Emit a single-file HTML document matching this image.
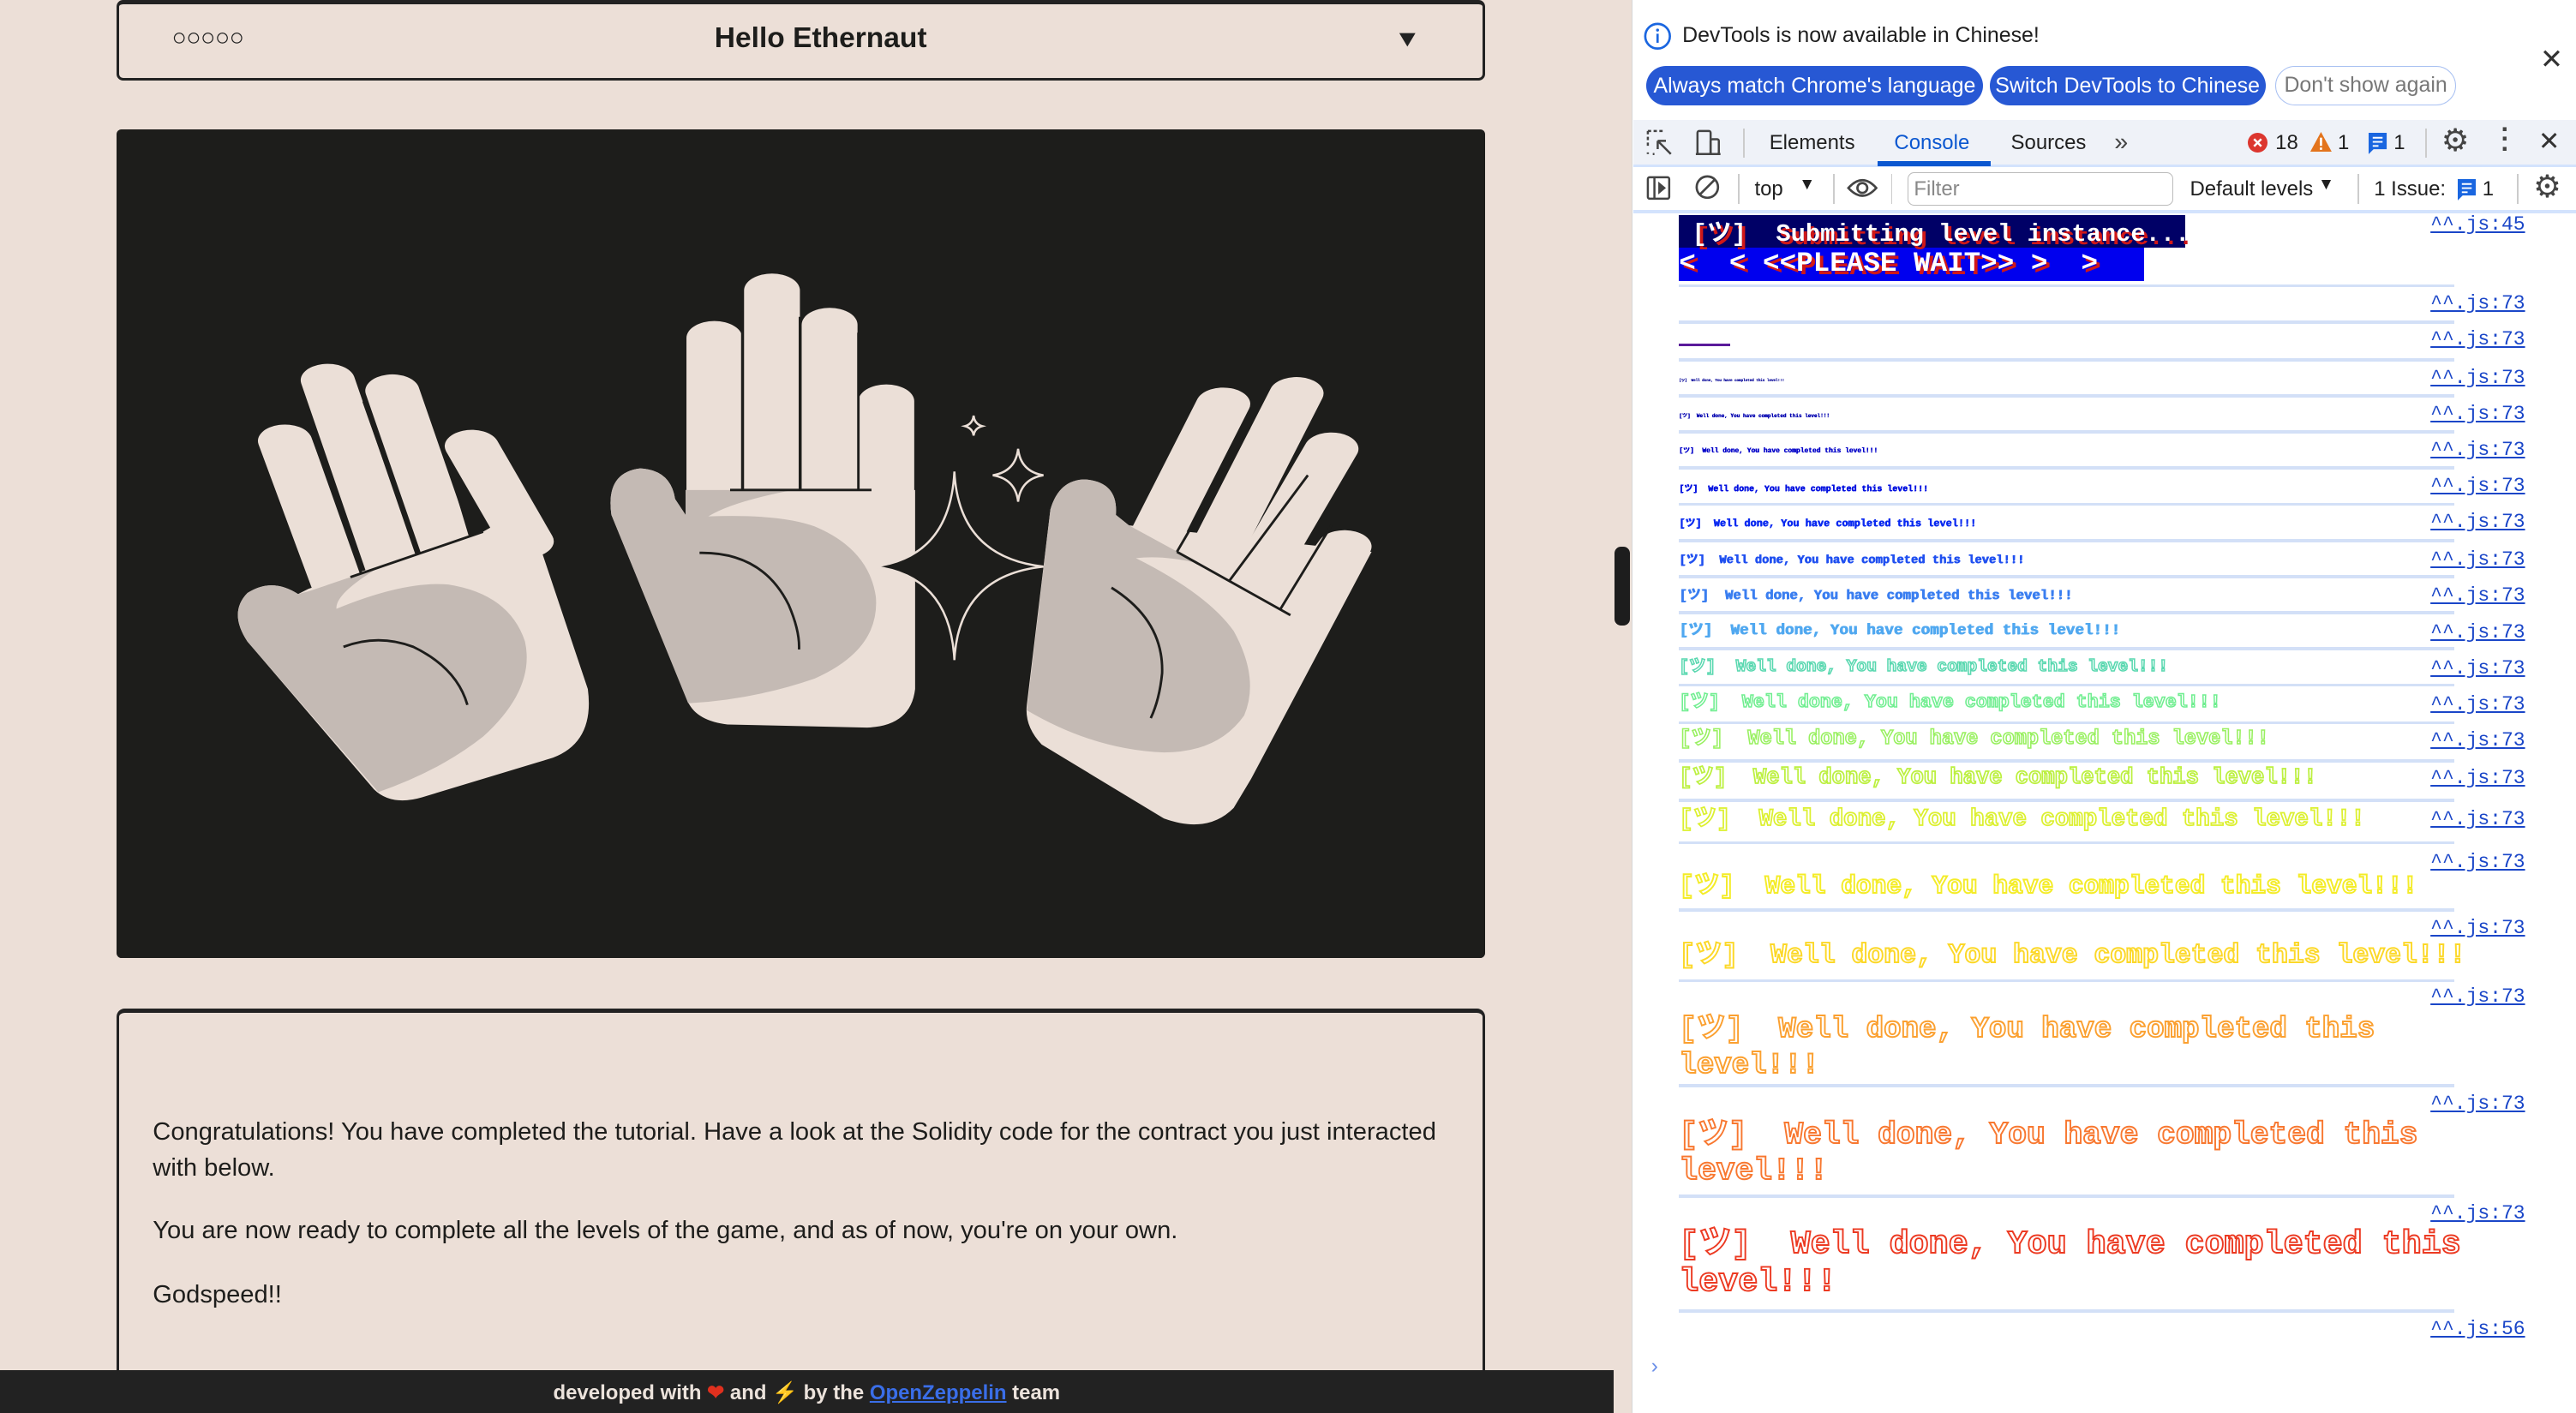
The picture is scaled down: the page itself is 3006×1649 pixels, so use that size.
<!DOCTYPE html>
<html><head><meta charset="utf-8">
<style>
html,body{margin:0;padding:0;width:3006px;height:1648px;overflow:hidden;background:#fff;}
.root{position:absolute;left:0;top:0;width:1568px;height:860px;zoom:1.91709;overflow:hidden;font-family:"Liberation Sans","Noto Sans CJK JP",sans-serif;}
.abs{position:absolute;}
.page{position:absolute;left:0;top:0;width:993px;height:860px;background:#ecdfd7;}
.hdr{position:absolute;left:71px;top:0px;width:830px;height:45px;border:2px solid #222;border-top-width:3px;border-radius:4px;box-sizing:content-box;}
.txtbox{position:absolute;left:71px;top:614px;width:830px;height:260px;border:2px solid #222;border-top-width:3px;border-radius:5px;}
.ptext{position:absolute;left:93px;font-size:15.2px;color:#1d1d1b;line-height:22px;}
.footer{position:absolute;left:0;top:834px;width:982px;height:26px;background:#222;color:#ece3dc;font-weight:bold;font-size:12.5px;text-align:center;line-height:28px;}
.dt{position:absolute;left:993px;top:0;width:575px;height:860px;background:#fff;border-left:1px solid #d6d6d6;}
.btn{position:absolute;top:40px;height:24px;border-radius:12px;background:#2758d4;color:#fff;font-size:13px;line-height:24px;text-align:center;}
.mono{font-family:"Liberation Mono","Noto Sans CJK JP",monospace;}
.lnk{position:absolute;right:31px;font-size:12px;color:#1a46c8;text-decoration:underline;line-height:14px;font-family:"Liberation Mono",monospace;}
.sep{position:absolute;left:1022px;width:472px;height:2px;background:#d3e0f7;}
.row{position:absolute;left:1022px;white-space:pre;line-height:1;font-weight:bold;font-family:"Liberation Mono","Noto Sans CJK JP",monospace;}
.f{text-shadow:0.05em 0 0 currentColor,0 0.03em 0 currentColor;}
.tb{font-size:12.5px;color:#1f1f1f;position:absolute;}
</style></head><body><div class="root">

<div class="page">
  <div class="hdr">
    <div class="abs" style="left:32px;top:12px;font-size:15px;color:#222;letter-spacing:-0.3px;">○○○○○</div>
    <div class="abs" style="left:12px;width:830px;top:11px;text-align:center;font-weight:bold;font-size:17.5px;color:#1d1d1b;">Hello Ethernaut</div>
    <div class="abs" style="left:777px;top:13px;font-size:14px;color:#222;transform:scaleX(1.2);">▼</div>
  </div>
  <div class="abs" style="left:71px;top:79px;width:833px;height:504px;background:#1d1d1b;border-radius:3px;overflow:hidden;">
    <svg width="833" height="504" viewBox="0 0 1568 1568" preserveAspectRatio="none">
      <g fill="#ebdfd7" stroke="none">
        <g stroke="#ebdfd7" stroke-width="62" stroke-linecap="round">
          <line x1="193" y1="590" x2="258" y2="880"/>
          <line x1="242" y1="475" x2="318" y2="840"/>
          <line x1="316" y1="495" x2="382" y2="810"/>
          <line x1="407" y1="600" x2="470" y2="780"/>
        </g>
        <path d="M220,870 L420,762 L470,715 L540,1060 Q548,1160 500,1190 L350,1265 Q315,1282 295,1250 L150,970 Q128,915 150,878 Q178,848 208,880 Z"/>
        <g stroke="#ebdfd7" stroke-width="64" stroke-linecap="round">
          <line x1="685" y1="395" x2="685" y2="700"/>
          <line x1="751" y1="305" x2="751" y2="700"/>
          <line x1="817" y1="370" x2="817" y2="700"/>
          <line x1="882" y1="515" x2="882" y2="700"/>
        </g>
        <path d="M652,683 L915,683 L915,1060 Q910,1130 860,1133 L700,1127 Q665,1120 655,1085 L567,730 Q560,650 600,642 Q635,645 640,700 L652,730 Z"/>
        <g stroke="#ebdfd7" stroke-width="62" stroke-linecap="round">
          <line x1="1268" y1="520" x2="1185" y2="790"/>
          <line x1="1352" y1="500" x2="1250" y2="830"/>
          <line x1="1392" y1="605" x2="1300" y2="865"/>
          <line x1="1407" y1="790" x2="1345" y2="930"/>
        </g>
        <path d="M1160,750 L1438,800 L1300,1230 L1280,1285 Q1250,1335 1200,1305 L1060,1165 Q1040,1130 1043,1090 L1070,720 Q1080,663 1110,663 Q1148,668 1145,730 Z"/>
      </g>
      <g fill="#c4bab4">
        <path d="M220,875 L300,830 Q250,880 252,908 Q330,855 380,862 Q450,880 468,970 Q480,1060 420,1150 Q370,1215 300,1255 L150,970 Q128,915 150,878 Q178,848 208,880 Z"/>
        <path d="M652,683 L775,683 Q705,705 678,733 Q760,728 800,752 Q862,795 870,885 Q875,985 800,1040 Q730,1080 655,1087 L567,730 Q560,650 600,642 Q635,645 640,700 L652,730 Z"/>
        <path d="M1160,750 L1240,822 Q1200,806 1168,812 Q1250,880 1280,950 Q1310,1040 1292,1110 Q1262,1180 1200,1180 Q1120,1175 1043,1100 L1070,720 Q1080,663 1110,663 Q1148,668 1145,730 Z"/>
      </g>
      <g fill="none" stroke="#1d1d1b" stroke-width="1.5">
        <path vector-effect="non-scaling-stroke" d="M268,848 L420,762 M220,560 L280,840 M283,515 L345,805 M375,605 L405,770 M260,980 Q300,955 340,980 Q390,1020 402,1090"/>
        <path vector-effect="non-scaling-stroke" d="M717,345 L717,683 M783,355 L783,683 M850,385 L850,683 M703,683 L865,683 M668,802 Q740,800 770,900 Q783,950 782,985"/>
        <path vector-effect="non-scaling-stroke" d="M1215,800 L1345,920 M1298,565 L1215,800 M1365,655 L1275,855 M1392,750 L1333,910 M1140,868 Q1200,930 1198,1030 Q1195,1080 1185,1115"/>
      </g>
      <g fill="#1d1d1b" stroke="#ebdfd7" stroke-width="1.3">
        <path vector-effect="non-scaling-stroke" d="M960,648 Q965,810 1062,828 Q965,845 960,1005 Q955,845 868,828 Q955,810 960,648 Z"/>
        <path vector-effect="non-scaling-stroke" d="M1033,605 Q1036,648 1062,655 Q1036,662 1033,705 Q1030,662 1004,655 Q1030,648 1033,605 Z"/>
        <path vector-effect="non-scaling-stroke" d="M982,542 Q983,558 992,562 Q983,566 982,580 Q981,566 972,562 Q981,558 982,542 Z"/>
      </g>
    </svg>
  </div>
  <div class="txtbox"></div>
  <div class="ptext" style="top:678px;width:792px;">Congratulations! You have completed the tutorial. Have a look at the Solidity code for the contract you just interacted with below.</div>
  <div class="ptext" style="top:738px;">You are now ready to complete all the levels of the game, and as of now, you're on your own.</div>
  <div class="ptext" style="top:777px;">Godspeed!!</div>
  <div class="footer">developed with <span style="color:#e0301e">❤</span> and <span style="color:#f5e13a">⚡</span> by the <span style="color:#3a6ee8;text-decoration:underline">OpenZeppelin</span> team</div>
  <div class="abs" style="left:983px;top:333px;width:9px;height:48px;background:#1d1d1d;border-radius:4px;"></div>
</div>

<div class="dt"></div>
<svg class="abs" style="left:1000px;top:13px" width="18" height="18" viewBox="0 0 18 18"><circle cx="9" cy="9" r="7.5" fill="none" stroke="#1a66e0" stroke-width="1.4"/><rect x="8.3" y="7.5" width="1.4" height="5.5" fill="#1a66e0"/><circle cx="9" cy="5.3" r="0.9" fill="#1a66e0"/></svg>
<div class="abs" style="left:1024px;top:14px;font-size:13px;color:#1f1f1f;">DevTools is now available in Chinese!</div>
<div class="btn" style="left:1002px;width:205px;">Always match Chrome's language</div>
<div class="btn" style="left:1211px;width:168px;">Switch DevTools to Chinese</div>
<div class="btn" style="left:1385px;width:110px;background:#fff;color:#777;border:1px solid #a9c1f2;box-sizing:border-box;line-height:22px;">Don't show again</div>
<div class="abs" style="left:1546px;top:26px;font-size:17px;color:#333;">✕</div>

<div class="abs" style="left:994px;top:73px;width:574px;height:27px;background:#eff2f8;border-bottom:2px solid #d3e3fd;"></div>
<svg class="abs" style="left:1002px;top:79px" width="16" height="16" viewBox="0 0 16 16" fill="none" stroke="#444" stroke-width="1.3"><path d="M1,1 h10 M1,1 v10 M1,14 v1 M4,15 h1" stroke-dasharray="2 1.5"/><path d="M7,7 L15,15 M7,7 v5 M7,7 h5"/></svg>
<svg class="abs" style="left:1031px;top:79px" width="17" height="16" viewBox="0 0 17 16" fill="none" stroke="#444" stroke-width="1.3"><rect x="2" y="1" width="8" height="14" rx="1"/><rect x="10" y="6" width="5" height="9" rx="1"/><path d="M1,15 h15"/></svg>
<div class="abs" style="left:1061px;top:78px;width:1px;height:18px;background:#ccc;"></div>
<div class="tb" style="left:1077px;top:80px;">Elements</div>
<div class="tb" style="left:1153px;top:80px;color:#0b57d0;">Console</div>
<div class="abs" style="left:1143px;top:98px;width:69px;height:3px;background:#0b57d0;"></div>
<div class="tb" style="left:1224px;top:80px;">Sources</div>
<div class="tb" style="left:1287px;top:78px;font-size:15px;color:#444;">»</div>
<svg class="abs" style="left:1368px;top:81px" width="12" height="12"><circle cx="6" cy="6" r="6" fill="#dc362e"/><path d="M3.8,3.8 L8.2,8.2 M8.2,3.8 L3.8,8.2" stroke="#fff" stroke-width="1.3"/></svg>
<div class="tb" style="left:1385px;top:80px;">18</div>
<svg class="abs" style="left:1406px;top:80px" width="14" height="13"><path d="M7,0.5 L13.5,12.5 H0.5 Z" fill="#e3741d"/><rect x="6.3" y="4" width="1.4" height="5" fill="#fff"/><rect x="6.3" y="10" width="1.4" height="1.4" fill="#fff"/></svg>
<div class="tb" style="left:1423px;top:80px;">1</div>
<svg class="abs" style="left:1442px;top:81px" width="11" height="13"><path d="M0,0 H11 V10 H3 L0,13 Z" fill="#1a66e0"/><path d="M2.5,3 H8.5 M2.5,5.5 H8.5 M2.5,8 H6" stroke="#fff" stroke-width="1"/></svg>
<div class="tb" style="left:1457px;top:80px;">1</div>
<div class="abs" style="left:1476px;top:78px;width:1px;height:18px;background:#ccc;"></div>
<div class="abs" style="left:1486px;top:74px;font-size:19px;color:#444;">⚙</div>
<div class="abs" style="left:1522px;top:76px;font-size:16px;color:#444;font-weight:bold;line-height:6px;width:6px;text-align:center;">·<br>·<br>·</div>
<div class="abs" style="left:1545px;top:77px;font-size:16px;color:#333;">✕</div>

<div class="abs" style="left:994px;top:128px;width:574px;height:2px;background:#d3e3fd;"></div>
<svg class="abs" style="left:1002px;top:107px" width="15" height="15" fill="none" stroke="#444" stroke-width="1.3"><rect x="1" y="1" width="13" height="13" rx="1"/><path d="M5,1 V14"/><path d="M8,5 L11,7.5 L8,10 Z" fill="#444"/></svg>
<svg class="abs" style="left:1031px;top:106px" width="16" height="16" fill="none" stroke="#444" stroke-width="1.4"><circle cx="8" cy="8" r="6.5"/><path d="M3.5,12.5 L12.5,3.5"/></svg>
<div class="abs" style="left:1058px;top:106px;width:1px;height:18px;background:#ccc;"></div>
<div class="tb" style="left:1068px;top:108px;">top</div>
<div class="tb" style="left:1095px;top:107px;font-size:10px;">▼</div>
<div class="abs" style="left:1116px;top:106px;width:1px;height:18px;background:#ccc;"></div>
<svg class="abs" style="left:1124px;top:107px" width="19" height="15" fill="none" stroke="#444" stroke-width="1.4"><path d="M1,7.5 Q9.5,-2 18,7.5 Q9.5,17 1,7.5 Z"/><circle cx="9.5" cy="7.5" r="3"/></svg>
<div class="abs" style="left:1151px;top:106px;width:1px;height:18px;background:#ccc;"></div>
<div class="abs" style="left:1161px;top:105px;width:162px;height:20px;border:1px solid #bbb;border-radius:4px;box-sizing:border-box;"></div>
<div class="tb" style="left:1165px;top:108px;color:#888;">Filter</div>
<div class="tb" style="left:1333px;top:108px;">Default levels</div>
<div class="tb" style="left:1411px;top:107px;font-size:10px;">▼</div>
<div class="abs" style="left:1435px;top:106px;width:1px;height:18px;background:#ccc;"></div>
<div class="tb" style="left:1445px;top:108px;">1 Issue:</div>
<svg class="abs" style="left:1496px;top:109px" width="11" height="13"><path d="M0,0 H11 V10 H3 L0,13 Z" fill="#1a66e0"/><path d="M2.5,3 H8.5 M2.5,5.5 H8.5 M2.5,8 H6" stroke="#fff" stroke-width="1"/></svg>
<div class="tb" style="left:1511px;top:108px;">1</div>
<div class="abs" style="left:1532px;top:106px;width:1px;height:18px;background:#ccc;"></div>
<div class="abs" style="left:1542px;top:102px;font-size:19px;color:#444;">⚙</div>

<div class="abs mono" style="left:1022px;top:131px;width:308px;height:20px;background:#000066;"></div>
<div class="abs mono" style="left:1022px;top:151px;width:283px;height:20px;background:#0000ee;"></div>
<div class="abs mono" style="left:1030px;top:130px;font-size:15px;font-weight:bold;color:#fff;white-space:pre;text-shadow:2px 2px 0 #d01818;">[ツ]  Submitting level instance...</div>
<div class="abs mono" style="left:1022px;top:151px;font-size:17px;font-weight:bold;color:#fff;white-space:pre;text-shadow:2px 2px 0 #d01818;">&lt;  &lt; &lt;&lt;PLEASE WAIT&gt;&gt; &gt;  &gt;</div>
<div class="lnk" style="top:130px;">^^.js:45</div>

<div class="sep" style="top:173px"></div>
<div class="lnk" style="top:178px;">^^.js:73</div>
<div class="sep" style="top:195px"></div>
<div class="lnk" style="top:200px;">^^.js:73</div>
<div class="abs" style="left:1022px;top:209px;width:31px;height:2px;background:#5a1a9a;"></div>
<div class="sep" style="top:218px"></div>
<div class="lnk" style="top:223px;">^^.js:73</div>
<div class="row f" style="top:231px;font-size:2.2px;color:#1a1aa0;">[ツ]  Well done, You have completed this level!!!</div>
<div class="sep" style="top:240px"></div>
<div class="lnk" style="top:245px;">^^.js:73</div>
<div class="row f" style="top:252px;font-size:3.15px;color:#0000b0;">[ツ]  Well done, You have completed this level!!!</div>
<div class="sep" style="top:262px"></div>
<div class="lnk" style="top:267px;">^^.js:73</div>
<div class="row f" style="top:273px;font-size:4.15px;color:#0000c8;">[ツ]  Well done, You have completed this level!!!</div>
<div class="sep" style="top:284px"></div>
<div class="lnk" style="top:289px;">^^.js:73</div>
<div class="row f" style="top:295px;font-size:5.2px;color:#0010e0;">[ツ]  Well done, You have completed this level!!!</div>
<div class="sep" style="top:306px"></div>
<div class="lnk" style="top:311px;">^^.js:73</div>
<div class="row f" style="top:316px;font-size:6.2px;color:#0a2af0;">[ツ]  Well done, You have completed this level!!!</div>
<div class="sep" style="top:328px"></div>
<div class="lnk" style="top:334px;">^^.js:73</div>
<div class="row f" style="top:338px;font-size:7.2px;color:#2050f0;">[ツ]  Well done, You have completed this level!!!</div>
<div class="sep" style="top:350px"></div>
<div class="lnk" style="top:356px;">^^.js:73</div>
<div class="row f" style="top:359px;font-size:8.2px;color:#3a7ef0;">[ツ]  Well done, You have completed this level!!!</div>
<div class="sep" style="top:372px"></div>
<div class="lnk" style="top:378px;">^^.js:73</div>
<div class="row f" style="top:380px;font-size:9.2px;color:#50a8f0;">[ツ]  Well done, You have completed this level!!!</div>
<div class="sep" style="top:394px"></div>
<div class="lnk" style="top:400px;">^^.js:73</div>
<div class="row" style="top:401px;font-size:10.2px;color:#fff;-webkit-text-stroke:0.8px #5ad8b0;">[ツ]  Well done, You have completed this level!!!</div>
<div class="sep" style="top:416px"></div>
<div class="lnk" style="top:422px;">^^.js:73</div>
<div class="row" style="top:422px;font-size:11.3px;color:#fff;-webkit-text-stroke:0.8px #70ee90;">[ツ]  Well done, You have completed this level!!!</div>
<div class="sep" style="top:439px"></div>
<div class="lnk" style="top:444px;">^^.js:73</div>
<div class="row" style="top:444px;font-size:12.3px;color:#fff;-webkit-text-stroke:0.8px #98f060;">[ツ]  Well done, You have completed this level!!!</div>
<div class="sep" style="top:462px"></div>
<div class="lnk" style="top:467px;">^^.js:73</div>
<div class="row" style="top:467px;font-size:13.3px;color:#fff;-webkit-text-stroke:0.9px #bcf040;">[ツ]  Well done, You have completed this level!!!</div>
<div class="sep" style="top:486px"></div>
<div class="lnk" style="top:492px;">^^.js:73</div>
<div class="row" style="top:492px;font-size:14.3px;color:#fff;-webkit-text-stroke:0.9px #dcf030;">[ツ]  Well done, You have completed this level!!!</div>
<div class="sep" style="top:512px"></div>
<div class="lnk" style="top:518px;">^^.js:73</div>
<div class="row" style="top:532px;font-size:15.4px;color:#fff;-webkit-text-stroke:1px #f4ec28;">[ツ]  Well done, You have completed this level!!!</div>
<div class="sep" style="top:553px"></div>
<div class="lnk" style="top:558px;">^^.js:73</div>
<div class="row" style="top:574px;font-size:16.4px;color:#fff;-webkit-text-stroke:1px #fcd828;">[ツ]  Well done, You have completed this level!!!</div>
<div class="sep" style="top:596px"></div>
<div class="lnk" style="top:600px;">^^.js:73</div>
<div class="row" style="top:616px;font-size:17.8px;line-height:22px;color:#fff;-webkit-text-stroke:1px #fba030;">[ツ]  Well done, You have completed this
level!!!</div>
<div class="sep" style="top:660px"></div>
<div class="lnk" style="top:665px;">^^.js:73</div>
<div class="row" style="top:680px;font-size:18.9px;line-height:22px;color:#fff;-webkit-text-stroke:1px #f87830;">[ツ]  Well done, You have completed this
level!!!</div>
<div class="sep" style="top:727px"></div>
<div class="lnk" style="top:732px;">^^.js:73</div>
<div class="row" style="top:746px;font-size:20px;line-height:23px;color:#fff;-webkit-text-stroke:1px #ec3a22;">[ツ]  Well done, You have completed this
level!!!</div>
<div class="sep" style="top:797px"></div>
<div class="lnk" style="top:802px;">^^.js:56</div>
<div class="abs" style="left:1005px;top:824px;font-size:13px;color:#6b8fe8;">›</div>

</div></body></html>
